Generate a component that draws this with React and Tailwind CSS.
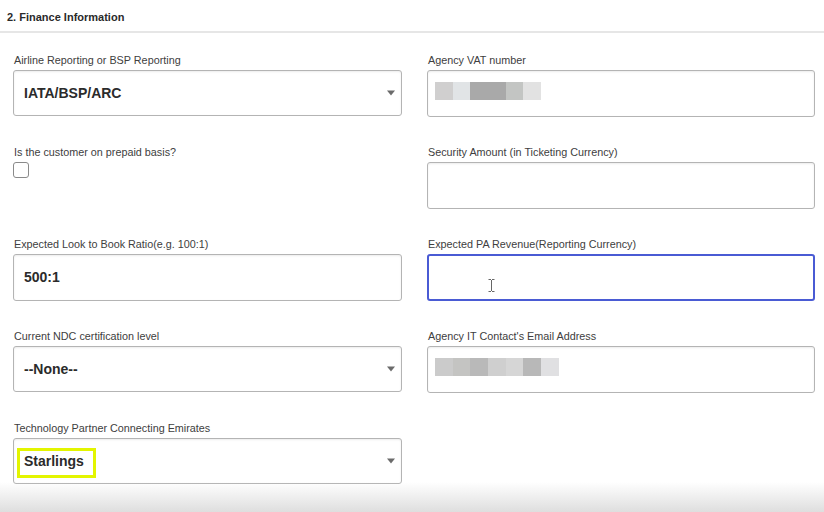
import React from 'react';

const font = { fontFamily: '"Liberation Sans", Arial, sans-serif' };

function Label({ children }) {
  return <div className="h-[17px] text-[10.8px] leading-[14px] text-[#404040] pl-px">{children}</div>;
}

function Chevron() {
  return (
    <span className="absolute right-[6px] top-1/2 -translate-y-1/2 w-0 h-0 border-l-[4px] border-r-[4px] border-t-[5px] border-l-transparent border-r-transparent border-t-[#6b6b6b]" />
  );
}

function SelectBox({ value, highlight }) {
  return (
    <div className="relative h-[46px] border border-[#b4b4b4] rounded-[3px] bg-white shadow-[inset_0_1px_2px_rgba(0,0,0,0.08)] flex items-center pl-[10px] pr-[14px]">
      <span className="text-[14px] font-bold text-[#2b2b2b]">{value}</span>
      <Chevron />
      {highlight && (
        <span className="absolute left-[3px] top-[9px] w-[79px] h-[30px] border-[3px] border-[#e3f500]" />
      )}
    </div>
  );
}

function TextBox({ value, blocks, focused }) {
  return (
    <div
      className={
        focused
          ? 'relative h-[47px] border-2 border-[#4a5bd4] rounded-[3px] bg-white'
          : 'relative h-[47px] border border-[#b4b4b4] rounded-[3px] bg-white shadow-[inset_0_1px_2px_rgba(0,0,0,0.08)] flex items-center pl-[10px]'
      }
    >
      {value && <span className="text-[14px] font-bold text-[#2b2b2b]">{value}</span>}
      {blocks && (
        <div className="flex -mt-[6px] -ml-[3px]">
          {blocks.map((b, i) => (
            <span key={i} className="h-[18px]" style={{ width: b[0], background: b[1] }} />
          ))}
        </div>
      )}
      {focused && (
        <svg className="absolute left-[59px] top-[23px]" width="7" height="13" viewBox="0 0 7 13">
          <path d="M0.5 0.5h2.5M4 0.5h2.5M3.5 1v11M0.5 12.5h2.5M4 12.5h2.5" stroke="#666" strokeWidth="1" fill="none" />
        </svg>
      )}
    </div>
  );
}

const vatBlocks = [
  [18, '#d0cfcf'],
  [17, '#e1e4e6'],
  [36, '#a9a9a9'],
  [17, '#c3c5c3'],
  [18, '#e2e2e2'],
];

const emailBlocks = [
  [18, '#cbcbcb'],
  [17, '#c4c4c2'],
  [18, '#b9b9b9'],
  [18, '#cfcfcf'],
  [17, '#d6d6d6'],
  [18, '#b8b8b8'],
  [18, '#e0e0e2'],
];

export default function App() {
  return (
    <div className="relative w-[824px] h-[512px] overflow-hidden bg-white" style={font}>
      <div className="h-[33px] border-b-2 border-[#e6e6e6] pl-[7px] pt-[10px]">
        <h2 className="text-[11px] leading-[14px] font-bold text-[#2a2a2a]">2. Finance Information</h2>
      </div>

      <div className="grid grid-cols-[389px_388px] gap-x-[25px] gap-y-[28px] pl-[13px] pt-[20px]">
        <div>
          <Label>Airline Reporting or BSP Reporting</Label>
          <SelectBox value="IATA/BSP/ARC" />
        </div>
        <div>
          <Label>Agency VAT number</Label>
          <TextBox blocks={vatBlocks} />
        </div>

        <div>
          <Label>Is the customer on prepaid basis?</Label>
          <div className="w-[16px] h-[16px] border border-[#8a8a8a] rounded-[3px] bg-white" />
        </div>
        <div>
          <Label>Security Amount (in Ticketing Currency)</Label>
          <TextBox />
        </div>

        <div>
          <Label>Expected Look to Book Ratio(e.g. 100:1)</Label>
          <TextBox value="500:1" />
        </div>
        <div>
          <Label>Expected PA Revenue(Reporting Currency)</Label>
          <TextBox focused />
        </div>

        <div>
          <Label>Current NDC certification level</Label>
          <SelectBox value="--None--" />
        </div>
        <div>
          <Label>Agency IT Contact's Email Address</Label>
          <TextBox blocks={emailBlocks} />
        </div>

        <div>
          <Label>Technology Partner Connecting Emirates</Label>
          <SelectBox value="Starlings" highlight />
        </div>
        <div />
      </div>

      <div className="absolute left-0 right-0 bottom-0 h-[30px] bg-gradient-to-b from-white/0 to-[#dedede]" />
    </div>
  );
}
